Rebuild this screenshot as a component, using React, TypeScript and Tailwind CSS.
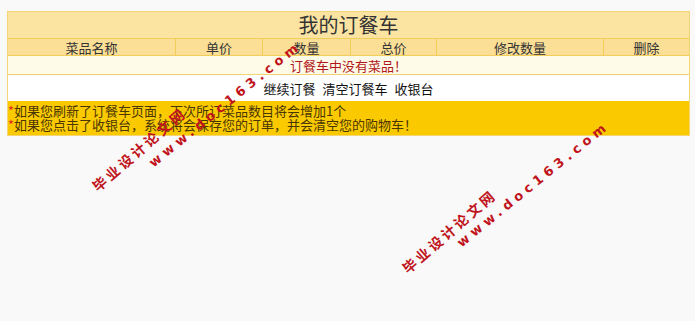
import React from 'react';

const cols = ['菜品名称', '单价', '数量', '总价', '修改数量', '删除'];

function Watermark({ cx, cy, wx, wy }: { cx: number; cy: number; wx: number; wy: number }) {
    return (
        <>
            <div
                className="absolute whitespace-nowrap text-[14px] font-bold tracking-[3px] text-[#c0141c] leading-none"
                style={{ left: cx, top: cy, transform: 'translate(-50%, -50%) rotate(-41deg)' }}
            >
                毕业设计论文网
            </div>
            <div
                className="absolute whitespace-nowrap text-[13px] font-bold tracking-[4.5px] text-[#c0141c] leading-none font-['DejaVu_Sans',sans-serif]"
                style={{ left: wx, top: wy, transform: 'translate(-50%, -50%) rotate(-39deg)' }}
            >
                www.doc163.com
            </div>
        </>
    );
}

export default function App() {
    return (
        <div className="relative w-[695px] h-[321px] bg-[#f9f9f9] overflow-hidden font-['Noto_Sans_CJK_SC',sans-serif] pt-[11px] pl-[7px]">
            <div className="w-[683px] border border-[#f3d574]">
                {/* title */}
                <div className="h-[26px] bg-[#fbe4a2] flex items-center justify-center text-[20px] text-[#333] leading-none">
                    我的订餐车
                </div>

                {/* header */}
                <div className="grid grid-cols-[168px_87px_88px_86px_167px_1fr] h-[18px] bg-[#fbdf97] border-t border-[#f2cd5a] border-b">
                    {cols.map((c, i) => (
                        <div
                            key={c}
                            className={`flex items-center justify-center text-[13px] text-[#333] leading-none ${i < cols.length - 1 ? 'border-r border-[#f2cd5a]' : ''}`}
                        >
                            {c}
                        </div>
                    ))}
                </div>

                {/* empty message */}
                <div className="h-[19px] bg-[#fffbe9] border-b border-[#f2d36e] flex items-center justify-center text-[13px] text-[#b01818] leading-none">
                    订餐车中没有菜品！
                </div>

                {/* actions */}
                <div className="h-[26px] bg-white flex items-center justify-center gap-[7px] text-[13px] text-[#111] leading-none">
                    <span>继续订餐</span>
                    <span>清空订餐车</span>
                    <span>收银台</span>
                </div>

                {/* notes */}
                <div className="bg-[#fac900] pt-[3px] pb-[3px] text-[13px] leading-[14px] text-[#4a3600]">
                    <div><span className="text-[#e0301e]">*</span>如果您刷新了订餐车页面，下次所订菜品数目将会增加1个</div>
                    <div><span className="text-[#e0301e]">*</span>如果您点击了收银台，系统将会保存您的订单，并会清空您的购物车！</div>
                </div>
            </div>

            <Watermark cx={139} cy={149} wx={225} wy={104} />
            <Watermark cx={449} cy={231} wx={533} wy={184} />
        </div>
    );
}
